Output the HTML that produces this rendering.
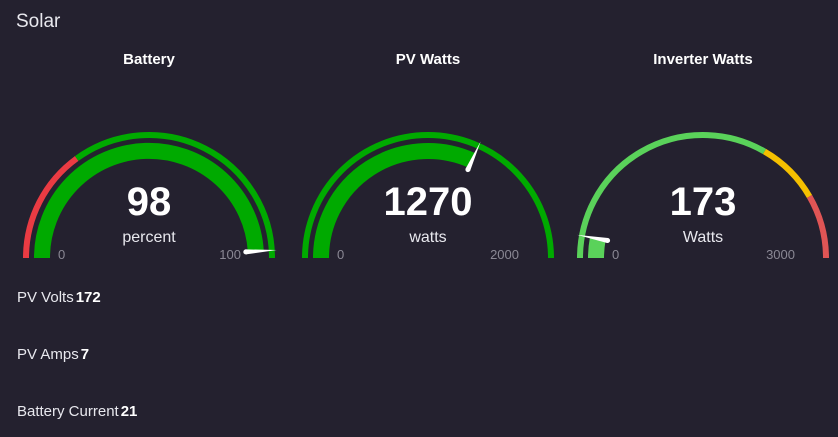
<!DOCTYPE html>
<html><head><style>
html,body{margin:0;padding:0;background:#24212f;width:838px;height:437px;overflow:hidden;font-family:"Liberation Sans",sans-serif;color:#fff}
svg{position:absolute;left:0;top:0}
.row{position:absolute;left:17px;font-size:15px;color:#e8e8ee}
.row b{color:#fff;margin-left:2px}
</style></head><body>
<svg width="838" height="437" font-family="Liberation Sans, sans-serif">
<text x="16" y="27" font-size="19" fill="#e8e8ee">Solar</text>
<g font-size="15" font-weight="bold" fill="#fff" text-anchor="middle">
<text x="149" y="64">Battery</text>
<text x="428" y="64">PV Watts</text>
<text x="703" y="64">Inverter Watts</text>
</g>
<g fill="none">
<path d="M26,258 A123,123 0 0 1 76.7,158.5" stroke="#ea3b43" stroke-width="6"/>
<path d="M76.7,158.5 A123,123 0 0 1 272,258" stroke="#00aa00" stroke-width="6"/>
<path d="M42,258 A107,107 0 0 1 255.8,251.3" stroke="#00aa00" stroke-width="16"/>
<path d="M305,258 A123,123 0 0 1 551,258" stroke="#00aa00" stroke-width="6"/>
<path d="M321,258 A107,107 0 0 1 472,160.5" stroke="#00aa00" stroke-width="16"/>
<path d="M580,258 A123,123 0 0 1 764.5,151.5" stroke="#5ad25a" stroke-width="6"/>
<path d="M764.5,151.5 A123,123 0 0 1 809.5,196.5" stroke="#f5c000" stroke-width="6"/>
<path d="M809.5,196.5 A123,123 0 0 1 826,258" stroke="#e05555" stroke-width="6"/>
<path d="M596,258 A107,107 0 0 1 597.8,238.7" stroke="#5ad25a" stroke-width="16"/>
</g>
<g fill="#fff">
<g transform="translate(149,258) rotate(-3.6)"><polygon points="97,-2.5 128,0 97,2.5"/><circle cx="97" cy="0" r="2.5"/></g>
<g transform="translate(428,258) rotate(-65.7)"><polygon points="97,-2.5 128,0 97,2.5"/><circle cx="97" cy="0" r="2.5"/></g>
<g transform="translate(703,258) rotate(-169.6)"><polygon points="97,-2.5 128,0 97,2.5"/><circle cx="97" cy="0" r="2.5"/></g>
</g>
<g font-size="40" font-weight="bold" fill="#fff" text-anchor="middle">
<text x="149" y="215">98</text>
<text x="428" y="215">1270</text>
<text x="703" y="215">173</text>
</g>
<g font-size="16" fill="#e8e8ee" text-anchor="middle">
<text x="149" y="242">percent</text>
<text x="428" y="242">watts</text>
<text x="703" y="242">Watts</text>
</g>
<g font-size="13" fill="#8a8894">
<text x="58" y="259">0</text>
<text x="241" y="259" text-anchor="end">100</text>
<text x="337" y="259">0</text>
<text x="519" y="259" text-anchor="end">2000</text>
<text x="612" y="259">0</text>
<text x="795" y="259" text-anchor="end">3000</text>
</g>
</svg>
<div class="row" style="top:289px">PV Volts<b>172</b></div>
<div class="row" style="top:346px">PV Amps<b>7</b></div>
<div class="row" style="top:403px">Battery Current<b>21</b></div>
</body></html>
